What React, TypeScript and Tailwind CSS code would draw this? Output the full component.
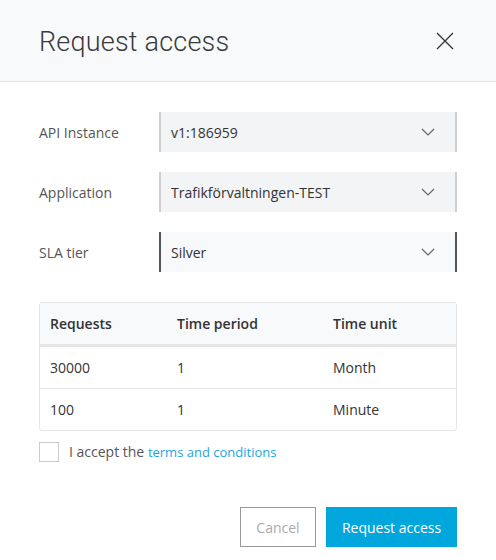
import React from 'react';

const rows = [
  { requests: '30000', period: '1', unit: 'Month' },
  { requests: '100', period: '1', unit: 'Minute' },
];

function Chevron() {
  return (
    <svg width="14" height="8" viewBox="0 0 14 8" fill="none" className="text-[#666]">
      <path d="M1 1l6 6 6-6" stroke="currentColor" strokeWidth="1.2" />
    </svg>
  );
}

function SelectRow({ label, value, active }: { label: string; value: string; active?: boolean }) {
  return (
    <div className="flex items-center h-10">
      <div className="w-[120px] text-[14px] text-[#555]">{label}</div>
      <div
        className={
          active
            ? 'flex-1 h-10 flex items-center justify-between pl-[10px] pr-[20px] border-x-2 border-[#555] bg-[#f8f9fa]'
            : 'flex-1 h-10 flex items-center justify-between pl-[10px] pr-[20px] border-x-2 border-[#cfcfcf] bg-[#f3f4f6]'
        }
      >
        <span className="text-[14px] text-[#333]">{value}</span>
        <Chevron />
      </div>
    </div>
  );
}

export default function App() {
  return (
    <div className="w-[496px] h-[560px] bg-white font-['Open_Sans',sans-serif]">
      {/* Header */}
      <div className="h-[82px] bg-[#f8f9fb] border-b border-[#e3e3e3] flex items-center justify-between pl-[39px] pr-[42px]">
        <h1 className="mt-[3px] font-['Roboto',sans-serif] font-light text-[27px] text-[#3a3a3a] tracking-[0.2px]">Request access</h1>
        <svg width="18" height="18" viewBox="0 0 18 18" fill="none" className="text-[#333]">
          <path d="M1 1l16 16M17 1L1 17" stroke="currentColor" strokeWidth="1.3" />
        </svg>
      </div>

      <div className="px-[39px] pt-[30px]">
        <div className="flex flex-col gap-5">
          <SelectRow label="API Instance" value="v1:186959" />
          <SelectRow label="Application" value="Trafikförvaltningen-TEST" />
          <SelectRow label="SLA tier" value="Silver" active />
        </div>

        {/* SLA table */}
        <div className="mt-[30px] border border-[#e6e6e6] rounded-[3px] overflow-hidden">
          <div className="flex items-center h-[44px] bg-[#f8f9fb] border-b-[3px] border-[#e6e6e6] text-[14px] font-semibold text-[#333]">
            <div className="w-[137px] pl-[10px]">Requests</div>
            <div className="w-[156px]">Time period</div>
            <div className="flex-1">Time unit</div>
          </div>
          {rows.map((r, i) => (
            <div
              key={i}
              className={
                i < rows.length - 1
                  ? 'flex items-center h-[42px] border-b border-[#e6e6e6] text-[14px] text-[#333]'
                  : 'flex items-center h-[41px] text-[14px] text-[#333]'
              }
            >
              <div className="w-[137px] pl-[10px]">{r.requests}</div>
              <div className="w-[156px]">{r.period}</div>
              <div className="flex-1">{r.unit}</div>
            </div>
          ))}
        </div>

        {/* Terms */}
        <div className="flex items-center mt-[11px] h-5">
          <div className="w-5 h-5 border border-[#cccccc] bg-white" />
          <span className="ml-[10px] text-[14px] text-[#555]">
            I accept the <span className="text-[13px] text-[#1aa6dc]">terms and conditions</span>
          </span>
        </div>

        {/* Actions */}
        <div className="flex justify-end gap-[10px] mt-[45px]">
          <button className="h-10 w-[76px] border border-[#999] text-[14px] text-[#aaa] bg-white">Cancel</button>
          <button className="h-10 w-[131px] bg-[#00a6dc] text-[14px] text-white">Request access</button>
        </div>
      </div>
    </div>
  );
}
